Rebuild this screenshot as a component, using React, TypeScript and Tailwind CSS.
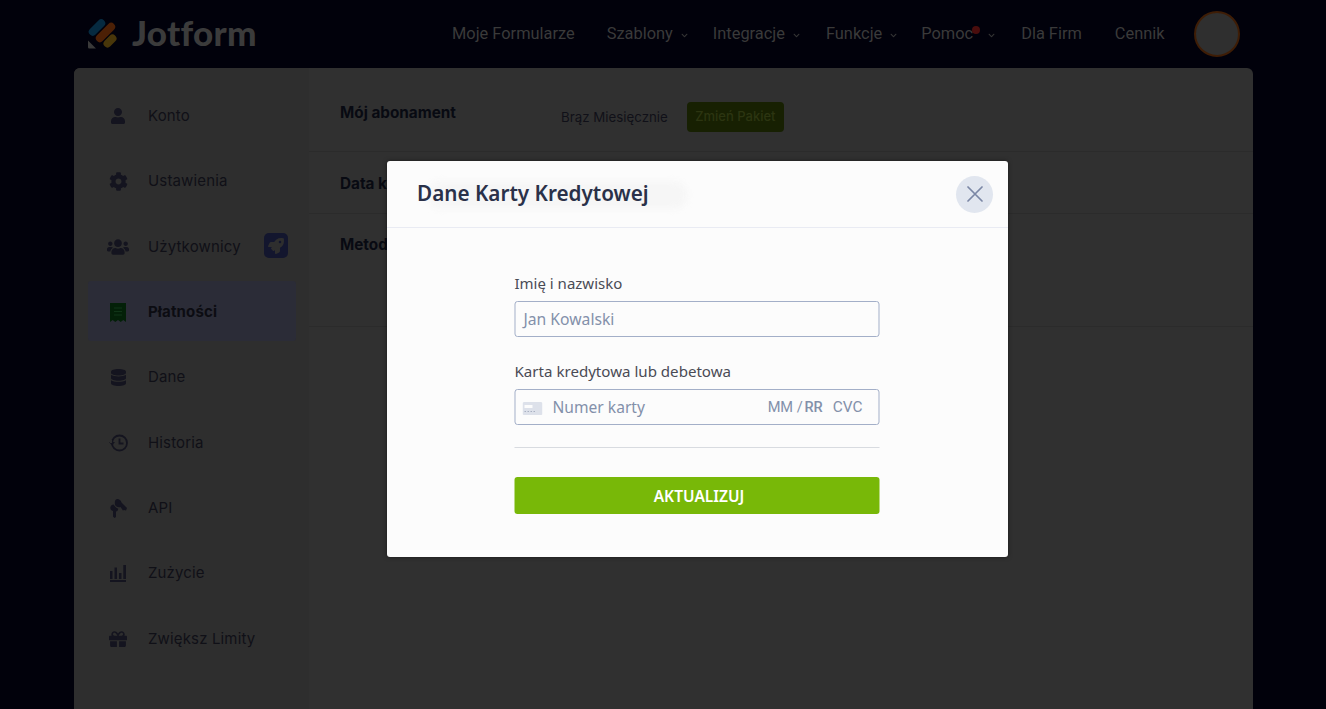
import React from "react";
import { FaUser, FaCog, FaUsers, FaRocket, FaDatabase, FaGift, FaChevronDown } from "react-icons/fa";

const ic = "#14141f";

function Receipt() {
  return (
    <svg width="16" height="19" viewBox="0 0 16 19">
      <path fill="#032008" d="M0 0h16v19l-2.700-2-2.600 2L8 17l-2.700 2-2.600-2L0 19z" />
      <path stroke="#103518" strokeWidth="1.200" d="M4 5h8M4 8.500h8M4 12h8" />
    </svg>
  );
}
function History() {
  return (
    <svg width="19" height="18" viewBox="0 0 19 18">
      <circle cx="10.500" cy="9" r="7.500" fill="none" stroke={ic} strokeWidth="1.800" />
      <path d="M0 8h6l-3 3.500z" fill={ic} />
      <rect x="1" y="6" width="2" height="3" fill="#2e2e2e" />
      <path d="M10.500 4.500v5h4" fill="none" stroke={ic} strokeWidth="1.800" />
    </svg>
  );
}
function Keys() {
  return (
    <svg width="17" height="19" viewBox="0 0 17 19" fill={ic}>
      <path d="M7 0c2.400 0 4 1.500 4.500 3.500L17 9l-1 2.500-2-.5-1 .5-2.500-3.500C8.500 8.500 5.500 8 5 5.500 4.500 3 5 .5 7 0z" />
      <path d="M3.500 5.500C5 7 6 9 8 9.500c.5 1.500-.5 2.500-2 3V18l-1.500 1L3 17.500V12C1 11.500 0 10 .5 8c.3-1.300 1.500-2.300 3-2.500z" />
    </svg>
  );
}
function Bars() {
  return (
    <svg width="16" height="17" viewBox="0 0 16 17" fill={ic}>
      <path d="M0 6h2.500v8H0zM4.500 2.500H7V14H4.500zM9 8h2.500v6H9zM13.300 0H16v14h-2.700zM0 15h16v2H0z" />
    </svg>
  );
}
function Logo() {
  return (
    <svg width="30" height="32" viewBox="0 0 30 32">
      <rect x="0" y="6.500" width="20" height="8" rx="4" fill="#062a40" transform="rotate(-45 10 10.500)" />
      <rect x="6.500" y="11.500" width="24" height="8" rx="4" fill="#4c2006" transform="rotate(-45 18.500 15.500)" />
      <rect x="15.500" y="20" width="15" height="8" rx="4" fill="#48360a" transform="rotate(-45 23 24)" />
      <path d="M1 23.500 9 31.500H2.500C1.500 31.500 1 31 1 30z" fill="#3a3a3a" />
    </svg>
  );
}

const items: { label: string; icon: React.ReactNode; active?: boolean; badge?: boolean }[] = [
  { label: "Konto", icon: <FaUser size={16} color={ic} /> },
  { label: "Ustawienia", icon: <FaCog size={19} color={ic} /> },
  { label: "Użytkownicy", icon: <FaUsers size={22} color={ic} />, badge: true },
  { label: "Płatności", icon: <Receipt />, active: true },
  { label: "Dane", icon: <FaDatabase size={17} color={ic} /> },
  { label: "Historia", icon: <History /> },
  { label: "API", icon: <Keys /> },
  { label: "Zużycie", icon: <Bars /> },
  { label: "Zwiększ Limity", icon: <FaGift size={18} color={ic} /> },
];

function NavItem({ label, chevron, dot, gap, chevGap = "ml-[8px]" }: { label: string; chevron?: boolean; dot?: boolean; gap: string; chevGap?: string }) {
  return (
    <div className={`relative flex items-center ${gap}`}>
      <span>{label}</span>
      {dot && <span className="absolute left-[51px] top-[4px] h-[8px] w-[8px] rounded-full bg-[#4a0d0d]" />}
      {chevron && <FaChevronDown size={7} className={`${chevGap} mt-[3px]`} color="#353535" />}
    </div>
  );
}

export default function App() {
  return (
    <div className="relative h-[709px] w-[1326px] overflow-hidden bg-[#01010b] font-['Inter',sans-serif]">
      <header className="flex h-[68px] items-center pl-[87px]">
        <div className="flex w-[365px] items-center gap-[15px] pb-[3px]">
          <Logo />
          <span className="font-['Lato',sans-serif] text-[35px] font-black leading-none tracking-[0.3px] text-[#3b3b3b]">Jotform</span>
        </div>
        <nav className="flex items-center font-['Roboto',sans-serif] text-[16.4px] font-normal text-[#3a3a3a]">
          <NavItem label="Moje Formularze" gap="mr-[32px]" />
          <NavItem label="Szablony" chevron gap="mr-[25px]" />
          <NavItem label="Integracje" chevron gap="mr-[26px]" />
          <NavItem label="Funkcje" chevron gap="mr-[24px]" />
          <NavItem label="Pomoc" chevron dot chevGap="ml-[15px]" gap="mr-[26px]" />
          <NavItem label="Dla Firm" gap="mr-[33px]" />
          <NavItem label="Cennik" gap="mr-[29px]" />
          <div className="h-[46px] w-[46px] rounded-full border-2 border-[#3e1d06] bg-[#2f2f2f]" />
        </nav>
      </header>

      <main className="ml-[74px] flex h-[641px] w-[1179px] rounded-t-[6px] bg-[#303030]">
        <aside className="w-[235px] shrink-0 rounded-tl-[6px] bg-[#2e2e2e] pb-[15px] pl-[14px] pr-[13px] pt-[17px]">
          {items.map((it) => (
            <div
              key={it.label}
              className={`mb-[5.4px] flex h-[60px] items-center rounded-[3px] pr-[8px] pt-[2px] text-[15px] tracking-[0.15px] ${it.active ? "bg-[#2b2c37] font-bold text-[#0c0c12]" : "text-[#101017]"}`}
            >
              <span className="flex w-[60px] shrink-0 justify-center">{it.icon}</span>
              <span>{it.label}</span>
              {it.badge && (
                <span className="ml-auto mb-[2px] flex h-[25px] w-[24px] items-center justify-center rounded-[5px] bg-[#13162e]">
                  <FaRocket size={16} color="#2e2e2e" />
                </span>
              )}
            </div>
          ))}
        </aside>
        <section className="flex-1 text-[15.3px]">
          <div className="flex h-[84px] items-center border-b border-[#2b2b2b] pl-[31px] pt-[16px]">
            <span className="mb-[8px] w-[221px] font-bold text-[#080a12]">Mój abonament</span>
            <span className="text-[13.3px] text-[#101018]">Brąz Miesięcznie</span>
            <span className="mb-[2px] ml-[19px] flex h-[30px] w-[97px] items-center justify-center rounded-[4px] bg-[#172002] text-[13px] font-medium text-[#2c3511]">Zmień Pakiet</span>
          </div>
          <div className="flex h-[62px] items-center border-b border-[#2b2b2b] pl-[31px] pt-[4px]">
            <span className="font-bold text-[#080a12]">Data k</span>
          </div>
          <div className="h-[113px] border-b border-[#2b2b2b] pl-[31px] pt-[20px]">
            <span className="font-bold text-[#080a12]">Metoda</span>
          </div>
        </section>
      </main>

      <div className="absolute left-[387px] top-[161px] h-[396px] w-[621px] rounded-[3px] bg-[#fcfcfc] font-['Noto_Sans',sans-serif] shadow-[0_0_4px_rgba(0,0,0,0.5)]">
        <div className="absolute left-[40px] top-[20px] h-[28px] w-[260px] rounded-full bg-[#f6f6f6] blur-[3px]" />
        <div className="relative flex h-[67px] items-center justify-between border-b border-[#e9ebf3] pl-[30px] pr-[15px]">
          <h2 className="text-[20.7px] font-semibold text-[#2a3149]">Dane Karty Kredytowej</h2>
          <div className="flex h-[37px] w-[37px] items-center justify-center rounded-full bg-[#e1e6ef]">
            <svg width="16" height="16" viewBox="0 0 16 16" stroke="#7b87a5" strokeWidth="1.700" strokeLinecap="round">
              <path d="M1 1l14 14M15 1L1 15" />
            </svg>
          </div>
        </div>
        <div className="mx-auto w-[365px] -translate-x-[0.5px] pt-[44px]">
          <label className="block text-[15px] leading-[22px] text-[#4a4b55]">Imię i nazwisko</label>
          <div className="mt-[7px] flex h-[36px] items-center rounded-[3px] border border-[#a3afc8] pl-[8px] pt-[2px] text-[15.7px] text-[#8390aa]">Jan Kowalski</div>
          <label className="mt-[23px] block text-[15.1px] leading-[22px] text-[#4a4b55]">Karta kredytowa lub debetowa</label>
          <div className="mt-[7px] flex h-[36px] items-center rounded-[3px] border border-[#a3afc8] pl-[7px] pr-[16px] pt-[2px] text-[15.6px] text-[#8390aa]">
            <svg width="20" height="13" viewBox="0 0 20 13" className="mr-[10px]">
              <rect width="20" height="13" rx="1.500" fill="#dde1ea" />
              <rect x="2" y="3" width="8" height="3" fill="#fcfcfc" />
              <path d="M2 9h1.500v1H2zM5 9h1.500v1H5zM8 9h1.500v1H8zM11 9h1.500v1H11z" fill="#a8b0c2" />
            </svg>
            <span>Numer karty</span>
            <span className="ml-auto font-['Roboto',sans-serif] text-[14.6px]">MM / <span className="ml-[-2px] font-medium">RR</span></span>
            <span className="ml-[10px] font-['Roboto',sans-serif] text-[15.4px]">CVC</span>
          </div>
          <div className="mt-[22px] h-px bg-[#d8dbe0]" />
          <button className="mt-[29px] flex h-[37px] w-full items-center justify-center rounded-[3px] bg-[#78b808] pl-[4px] pt-[2px] text-[15.5px] font-semibold text-white">AKTUALIZUJ</button>
        </div>
      </div>
    </div>
  );
}
